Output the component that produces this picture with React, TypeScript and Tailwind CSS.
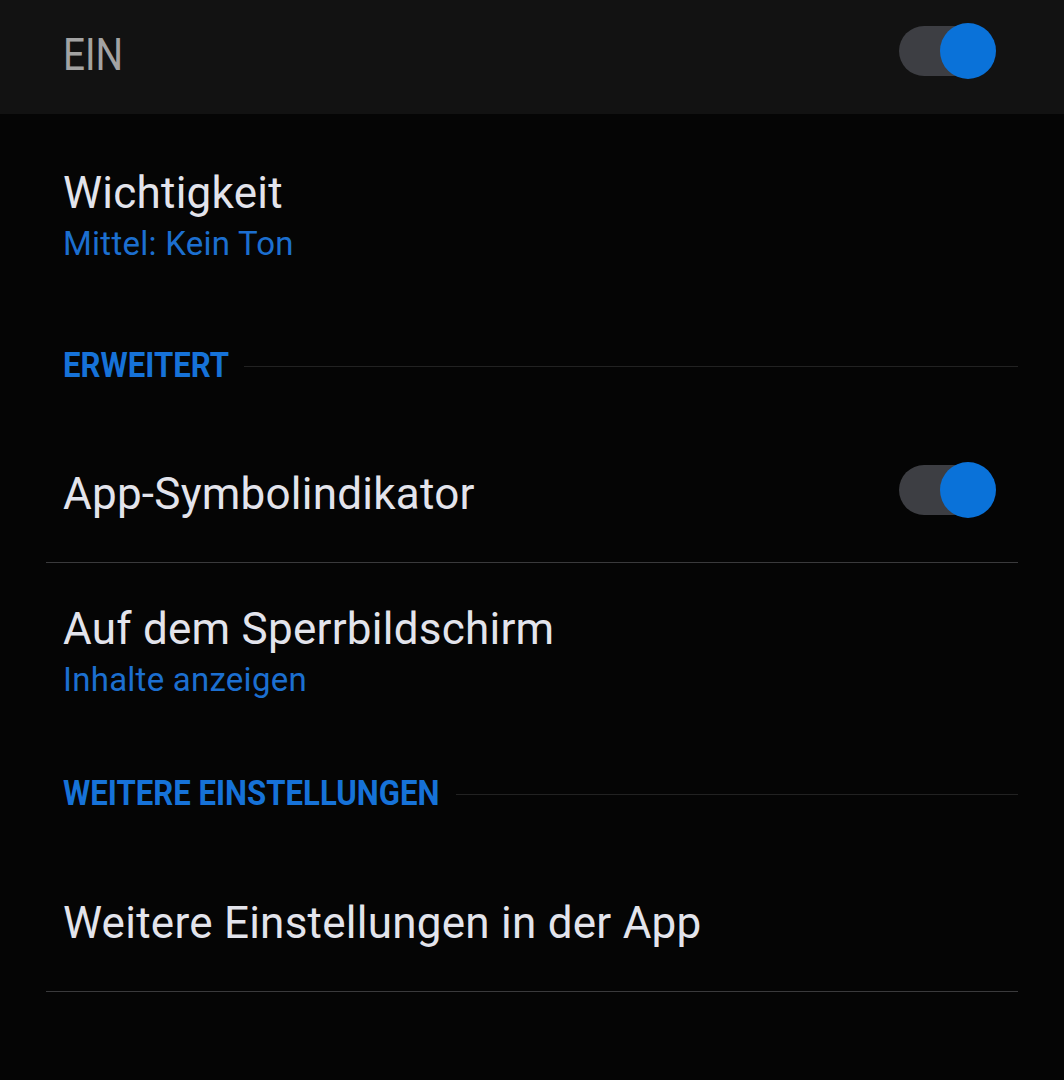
import React, { useState } from 'react';

interface ToggleProps {
  on: boolean;
  onChange: (value: boolean) => void;
}

const Toggle: React.FC<ToggleProps> = ({ on, onChange }) => (
  <button
    onClick={() => onChange(!on)}
    className="relative w-[97px] h-[56px] shrink-0"
    aria-pressed={on}
  >
    <span className="absolute left-0 top-[3px] w-[88px] h-[50px] rounded-full bg-[#3d3e43]" />
    <span
      className={
        on
          ? 'absolute right-0 top-0 w-[56px] h-[56px] rounded-full bg-[#0a72d9]'
          : 'absolute left-0 top-0 w-[56px] h-[56px] rounded-full bg-[#9a9a9a]'
      }
    />
  </button>
);

const SectionHeader: React.FC<{ label: string; width: string }> = ({ label, width }) => (
  <div className="flex items-center pl-[63px] pr-[46px] h-[40px]">
    <span className={`${width} shrink-0 overflow-visible whitespace-nowrap`}>
      <span className="inline-block origin-left scale-x-[0.89] text-[35px] leading-[40px] font-bold text-[#1672d8]">
        {label}
      </span>
    </span>
    <div className="flex-1 h-px bg-[#222222] ml-[15px]" />
  </div>
);

const App: React.FC = () => {
  const [enabled, setEnabled] = useState(true);
  const [badge, setBadge] = useState(true);

  return (
    <div
      className="w-[1064px] h-[1080px] bg-[#050505] overflow-hidden"
      style={{ fontFamily: 'Roboto, "Noto Sans", sans-serif' }}
    >
      {/* Hauptschalter */}
      <div className="h-[114px] bg-[#121212] flex items-center justify-between pl-[63px] pr-[68px]">
        <span className="inline-block origin-left scale-x-[0.86] text-[45px] leading-[50px] text-[#a3a3a3] -mt-[4px]">
          EIN
        </span>
        <div className="-mt-[6px]">
          <Toggle on={enabled} onChange={setEnabled} />
        </div>
      </div>

      {/* Wichtigkeit */}
      <div className="pt-[54px] pl-[63px]">
        <div className="text-[44px] leading-[50px] tracking-[0.25px] text-[#e3e4ec]">Wichtigkeit</div>
        <div className="text-[33px] leading-[52px] tracking-[0.25px] text-[#1c6fd0]">Mittel: Kein Ton</div>
      </div>

      <div className="mt-[76px]">
        <SectionHeader label="ERWEITERT" width="w-[166px]" />
      </div>

      {/* App-Symbolindikator */}
      <div className="mx-[46px] h-[177px] border-b border-[#3a3a3c] flex items-start justify-between pl-[17px] pr-[22px] pt-[76px]">
        <span className="text-[44px] leading-[50px] tracking-[0.25px] text-[#e3e4ec] mt-[7px]">App-Symbolindikator</span>
        <Toggle on={badge} onChange={setBadge} />
      </div>

      {/* Sperrbildschirm */}
      <div className="pt-[41px] pl-[63px]">
        <div className="text-[44px] leading-[50px] tracking-[0.25px] text-[#e3e4ec]">Auf dem Sperrbildschirm</div>
        <div className="text-[33px] leading-[52px] tracking-[0.25px] text-[#1c6fd0]">Inhalte anzeigen</div>
      </div>

      <div className="mt-[68px]">
        <SectionHeader label="WEITERE EINSTELLUNGEN" width="w-[378px]" />
      </div>

      {/* Weitere Einstellungen */}
      <div className="mx-[46px] pl-[17px] pt-[84px] pb-[43px] border-b border-[#3a3a3c]">
        <span className="block text-[44px] leading-[50px] tracking-[0.25px] text-[#e3e4ec]">Weitere Einstellungen in der App</span>
      </div>
    </div>
  );
};

export default App;
